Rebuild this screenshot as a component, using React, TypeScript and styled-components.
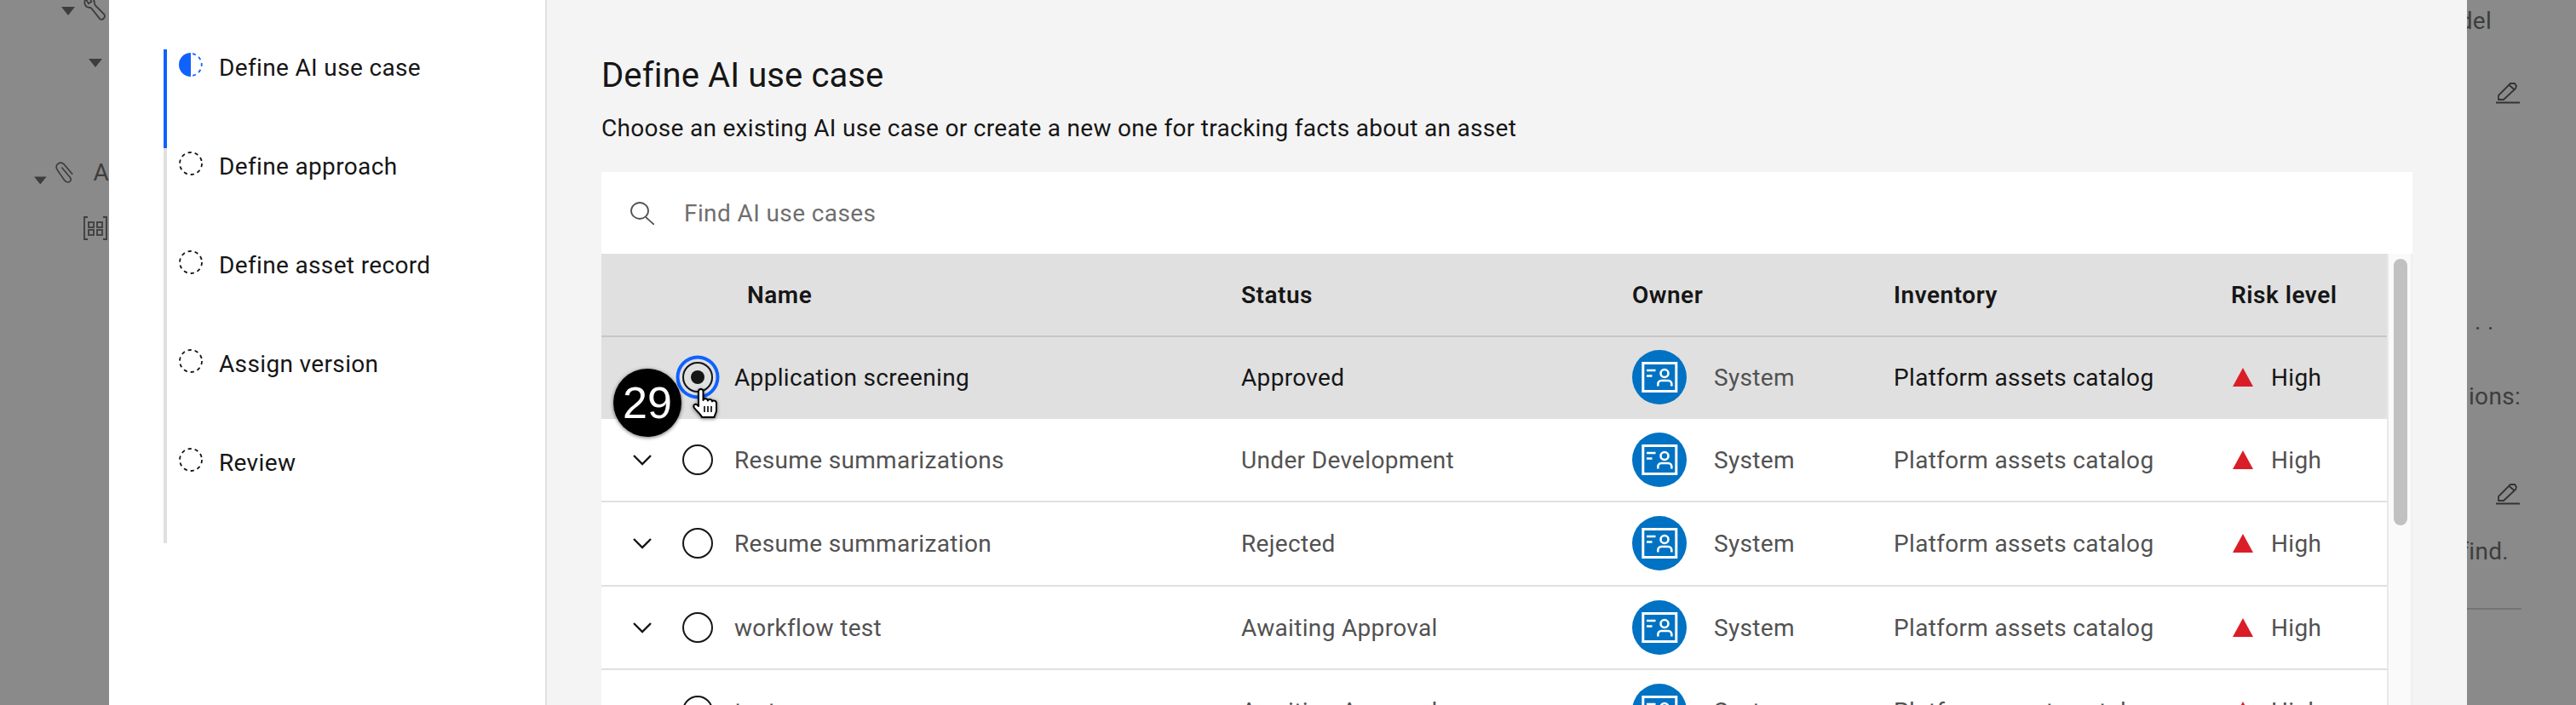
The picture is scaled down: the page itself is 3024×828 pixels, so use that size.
import styled, { createGlobalStyle } from 'styled-components'

const GlobalStyle = createGlobalStyle`
  html, body {
    margin: 0;
    padding: 0;
    height: 828px;
    overflow: hidden;
    background: #8a8a8a;
    font-family: Roboto, "Noto Sans", sans-serif;
    color: #161616;
  }
  * { box-sizing: border-box; }
`

const Page = styled.div`
  display: grid;
  grid-template-columns: 128px 2768px 128px;
  width: 3024px;
  height: 828px;
  overflow: hidden;
`

const Backdrop = styled.div`
  background: #8a8a8a;
  color: #3d3d3d;
  overflow: hidden;
  height: 828px;
`

const BackRow = styled.div<{ $h: number; $pad: number; $gap?: number; $end?: boolean }>`
  display: flex;
  align-items: ${p => (p.$end ? 'flex-end' : 'center')};
  height: ${p => p.$h}px;
  padding-left: ${p => p.$pad}px;
  gap: ${p => p.$gap ?? 0}px;
  white-space: nowrap;
`

const BackText = styled.span`
  font-size: 28px;
  line-height: 28px;
  letter-spacing: 0.3px;
`

const BackInitial = styled(BackText)`
  margin-left: 10px;
`

const BackRight = styled.div<{ $h: number; $end: number }>`
  display: flex;
  align-items: center;
  justify-content: flex-end;
  height: ${p => p.$h}px;
  padding-right: ${p => p.$end}px;
  white-space: nowrap;
`

const BackRule = styled.div`
  height: 2px;
  width: 64px;
  background: #737373;
`

const WrenchIcon = styled.svg`
  margin-top: -6px;
  flex: none;
`

const Modal = styled.div`
  display: grid;
  grid-template-columns: 514px 1fr;
  height: 828px;
  background: #f4f4f4;
`

const StepsPane = styled.nav`
  background: #fff;
  border-right: 2px solid #e0e0e0;
  padding: 58px 0 0 64px;
`

const Step = styled.div<{ $active?: boolean }>`
  display: flex;
  align-items: flex-start;
  gap: 19px;
  height: 116px;
  padding: 4px 0 0 14px;
  border-left: 4px solid ${p => (p.$active ? '#0f62fe' : '#e0e0e0')};
`

const StepLabel = styled.span`
  display: block;
  padding-top: 2px;
  font-size: 28px;
  line-height: 32px;
  color: #161616;
  white-space: nowrap;
  letter-spacing: 0.35px;
`

const StepIcon = styled.svg`
  flex: none;
  width: 28px;
  height: 28px;
`

const Main = styled.main`
  padding: 0 64px;
  min-width: 0;
`

const Title = styled.h2`
  margin: 0;
  padding-top: 65px;
  font-size: 40px;
  line-height: 48px;
  font-weight: 400;
  color: #161616;
  letter-spacing: 0.1px;
`

const Subtitle = styled.p`
  margin: 0;
  padding-top: 20px;
  height: 89px;
  font-size: 28px;
  line-height: 36px;
  color: #161616;
  letter-spacing: 0.3px;
`

const Search = styled.div`
  display: flex;
  align-items: center;
  gap: 35px;
  height: 96px;
  padding-left: 34px;
  background: #fff;
  color: #6f6f6f;
  font-size: 28px;
  letter-spacing: 0.4px;
`

const TableWrap = styled.div`
  display: flex;
`

const Table = styled.div`
  flex: 1;
  min-width: 0;
`

const columns = '95px 61px 595px 459px 307px 396px 183px'

const HeaderRow = styled.div`
  display: grid;
  grid-template-columns: ${columns};
  align-items: center;
  height: 98px;
  background: #e0e0e0;
  border-bottom: 2px solid #c6c6c6;
  font-size: 28px;
  font-weight: 600;
  color: #161616;
  letter-spacing: 0.5px;
`

const HeaderName = styled.span`
  padding-left: 15px;
`

const Row = styled.div<{ $selected?: boolean }>`
  position: relative;
  display: grid;
  grid-template-columns: ${columns};
  align-items: center;
  height: ${p => (p.$selected ? '96px' : '98.3px')};
  background: ${p => (p.$selected ? '#e0e0e0' : '#fff')};
  border-bottom: 2px solid #e0e0e0;
  font-size: 28px;
  color: ${p => (p.$selected ? '#161616' : '#525252')};
  letter-spacing: 0.33px;
`

const CellText = styled.span`
  padding-top: 1px;
`

const Chevron = styled.svg`
  justify-self: center;
  width: 22px;
  height: 14px;
`

const Radio = styled.span<{ $on?: boolean }>`
  display: flex;
  align-items: center;
  justify-content: center;
  width: 36px;
  height: 36px;
  border: 2.5px solid #161616;
  border-radius: 50%;
  box-shadow: ${p => (p.$on ? '0 0 0 3.5px #e0e0e0, 0 0 0 7.5px #0f62fe' : 'none')};
`

const RadioDot = styled.span`
  width: 16px;
  height: 16px;
  border-radius: 50%;
  background: #161616;
`

const OwnerCell = styled.div`
  display: flex;
  align-items: center;
  gap: 32px;
  color: #525252;
`

const Avatar = styled.svg`
  width: 64px;
  height: 64px;
  flex: none;
`

const RiskCell = styled.div`
  display: flex;
  align-items: center;
  gap: 21px;
  padding-left: 2px;
`

const RiskIcon = styled.svg`
  width: 24px;
  height: 22px;
  flex: none;
`

const StepBadge = styled.div`
  position: absolute;
  left: 14px;
  top: 37px;
  z-index: 2;
  display: flex;
  align-items: center;
  justify-content: center;
  width: 80px;
  height: 80px;
  border-radius: 50%;
  background: #000;
  box-shadow: 0 1px 4px rgba(0, 0, 0, 0.6);
  color: #fff;
  font-family: "Liberation Sans", Arial, sans-serif;
  font-size: 52px;
  letter-spacing: 0;
`

const Cursor = styled.svg`
  position: absolute;
  left: 106px;
  top: 60px;
  z-index: 3;
  width: 32px;
  height: 35px;
  filter: drop-shadow(0 1px 2px rgba(0, 0, 0, 0.5));
`

const Gutter = styled.div`
  flex: none;
  width: 30px;
  height: 530px;
  padding: 6px 4px 0 6px;
  background: #fafafa;
  border-left: 2px solid #e8e8e8;
  border-right: 2px solid #f0f0f0;
`

const Thumb = styled.div`
  width: 16px;
  height: 313px;
  border-radius: 8px;
  background: #c1c1c1;
`

const StepDash = ({ blue }: { blue?: boolean }) => (
  <StepIcon viewBox="0 0 28 28">
    {blue ? (
      <>
        <path d="M14 0a14 14 0 0 0 0 28z" fill="#0f62fe" />
        <path
          d="M16 1.2a13 13 0 0 1 0 25.6"
          fill="none"
          stroke="#0f62fe"
          strokeWidth="1.8"
          strokeDasharray="4 4"
        />
      </>
    ) : (
      <circle cx="14" cy="14" r="13" fill="none" stroke="#161616" strokeWidth="1.8" strokeDasharray="4.2 4" />
    )}
  </StepIcon>
)

const Caret = () => (
  <svg width="16" height="10" viewBox="0 0 16 10">
    <path d="M0 0h16L8 10z" fill="#3d3d3d" />
  </svg>
)

const Pencil = () => (
  <svg width="28" height="27" viewBox="0 0 28 27" fill="none" stroke="#333" strokeWidth="1.8">
    <path d="M3 22v-5L17 3l5 0 2 3-1 3L9 22z" />
    <path d="M15.5 5l6 5" />
    <path d="M0 25.5h28" strokeWidth="2" />
  </svg>
)

const steps = ['Define AI use case', 'Define approach', 'Define asset record', 'Assign version', 'Review']

const rows = [
  { name: 'Application screening', status: 'Approved' },
  { name: 'Resume summarizations', status: 'Under Development' },
  { name: 'Resume summarization', status: 'Rejected' },
  { name: 'workflow test', status: 'Awaiting Approval' },
  { name: 'test', status: 'Awaiting Approval' },
]

export default function App() {
  return (
    <>
      <GlobalStyle />
      <Page>
        <Backdrop>
          <BackRow $h={26} $pad={72} $gap={10}>
            <Caret />
            <WrenchIcon width="28" height="31" viewBox="0 0 24 27" fill="none" stroke="#3d3d3d" strokeWidth="1.6">
              <path d="M2 3c-2 4-1 8 3 9 1 0 2 0 3 1l8 10c2 3 7 0 5-4L12 10c-1-1-1-2-1-3 0-3-3-6-6-6l3 5-3 2z" />
            </WrenchIcon>
          </BackRow>
          <BackRow $h={96} $pad={104}>
            <Caret />
          </BackRow>
          <BackRow $h={95} $pad={40} $gap={10} $end>
            <Caret />
            <svg width="27" height="28" viewBox="0 0 27 28" fill="none" stroke="#3d3d3d" strokeWidth="1.8">
              <path d="M8 7l11 13c2 3 0 6-3 6-1 0-3-1-4-2L3 11C0 7 1 4 4 2s5-1 7 1l11 13" />
            </svg>
            <BackInitial>A</BackInitial>
          </BackRow>
          <BackRow $h={65} $pad={98} $end>
            <svg width="28" height="28" viewBox="0 0 28 28" fill="none" stroke="#3d3d3d" strokeWidth="1.8">
              <path d="M5 1H1v26h4M23 1h4v26h-4" />
              <rect x="6" y="7" width="6" height="6" />
              <rect x="16" y="7" width="6" height="6" />
              <rect x="6" y="16" width="6" height="6" />
              <rect x="16" y="16" width="6" height="6" />
            </svg>
          </BackRow>
        </Backdrop>

        <Modal>
          <StepsPane>
            {steps.map((s, i) => (
              <Step key={s} $active={i === 0}>
                <StepDash blue={i === 0} />
                <StepLabel>{s}</StepLabel>
              </Step>
            ))}
          </StepsPane>

          <Main>
            <Title>Define AI use case</Title>
            <Subtitle>Choose an existing AI use case or create a new one for tracking facts about an asset</Subtitle>
            <Search>
              <svg width="28" height="27" viewBox="0 0 28 27" fill="none" stroke="#525252" strokeWidth="1.8">
                <ellipse cx="11" cy="10.5" rx="10" ry="9.5" />
                <path d="M18 18l10 9" />
              </svg>
              Find AI use cases
            </Search>
            <TableWrap>
              <Table>
                <HeaderRow>
                  <span />
                  <span />
                  <HeaderName>Name</HeaderName>
                  <span>Status</span>
                  <span>Owner</span>
                  <span>Inventory</span>
                  <span>Risk level</span>
                </HeaderRow>
                {rows.map((r, i) => (
                  <Row key={r.name} $selected={i === 0}>
                    {i === 0 ? (
                      <span />
                    ) : (
                      <Chevron viewBox="0 0 22 14">
                        <path d="M1 2l10 10L21 2" fill="none" stroke="#161616" strokeWidth="2.4" />
                      </Chevron>
                    )}
                    <Radio $on={i === 0}>{i === 0 && <RadioDot />}</Radio>
                    <CellText>{r.name}</CellText>
                    <CellText>{r.status}</CellText>
                    <OwnerCell>
                      <Avatar viewBox="0 0 64 64">
                        <circle cx="32" cy="32" r="32" fill="#0072c3" />
                        <g fill="none" stroke="#fff">
                          <rect x="12.8" y="15.5" width="39" height="33" strokeWidth="3" />
                          <path d="M17 24h10.5M17 30.5h6.5" strokeWidth="2.6" />
                          <circle cx="38" cy="27.5" r="4.5" strokeWidth="2.6" />
                          <path d="M30.3 42.5V40a4 4 0 0 1 4-4h8a4 4 0 0 1 4 4v2.5" strokeWidth="2.6" />
                        </g>
                      </Avatar>
                      <CellText>System</CellText>
                    </OwnerCell>
                    <CellText>Platform assets catalog</CellText>
                    <RiskCell>
                      <RiskIcon viewBox="0 0 24 22">
                        <path d="M12 0l12 22H0z" fill="#da1e28" />
                      </RiskIcon>
                      <CellText>High</CellText>
                    </RiskCell>
                    {i === 0 && (
                      <>
                        <StepBadge>29</StepBadge>
                        <Cursor viewBox="0 0 32 35">
                          <path
                            d="M8 3.5c0-3.5 5.5-3.5 5.5 0V14c.5-2.5 5-2.5 5.5 .5.5-2 5-2 5 1 .5-1.5 5-1.5 5 2V26c0 3-2 5-2.5 8H12c-1-3-5-6-9-11-2-3 1-5.5 3.5-3.5L8 21z"
                            fill="#fff"
                            stroke="#000"
                            strokeWidth="2"
                            strokeLinejoin="round"
                          />
                          <path d="M15 21v7M19 21v7M23 21v7" stroke="#000" strokeWidth="1.6" />
                        </Cursor>
                      </>
                    )}
                  </Row>
                ))}
              </Table>
              <Gutter>
                <Thumb />
              </Gutter>
            </TableWrap>
          </Main>
        </Modal>

        <Backdrop>
          <BackRight $h={50} $end={99}>
            <BackText>del</BackText>
          </BackRight>
          <BackRow $h={72} $pad={34} $end>
            <Pencil />
          </BackRow>
          <BackRow $h={270} $pad={9} $end>
            <BackText>. .</BackText>
          </BackRow>
          <BackRight $h={148} $end={65}>
            <BackText>ions:</BackText>
          </BackRight>
          <BackRow $h={53} $pad={34} $end>
            <Pencil />
          </BackRow>
          <BackRight $h={110} $end={79}>
            <BackText>find.</BackText>
          </BackRight>
          <BackRow $h={24} $pad={0}>
            <BackRule />
          </BackRow>
        </Backdrop>
      </Page>
    </>
  )
}
